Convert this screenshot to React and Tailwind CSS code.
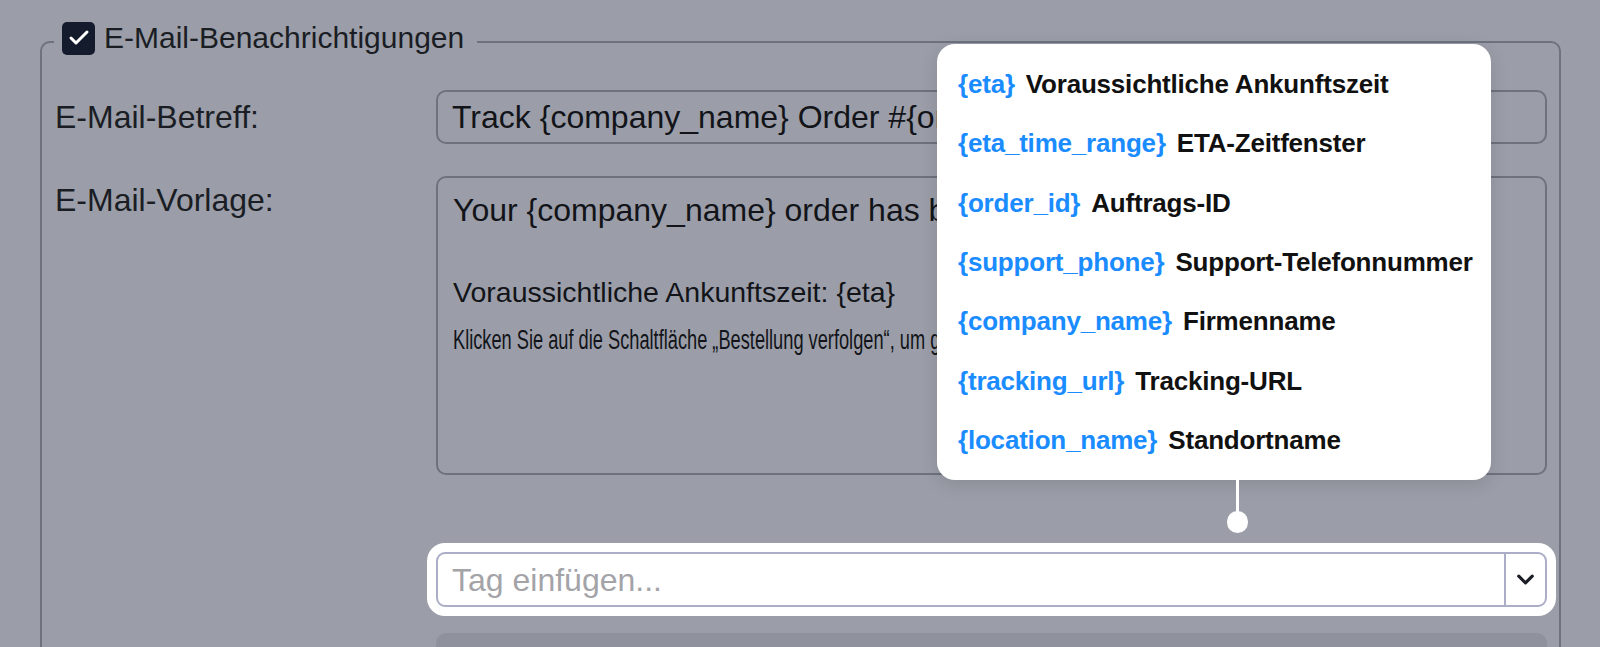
import { Check, ChevronDown } from 'lucide-react'

const tags = [
  ['{eta}', 'Voraussichtliche Ankunftszeit'],
  ['{eta_time_range}', 'ETA-Zeitfenster'],
  ['{order_id}', 'Auftrags-ID'],
  ['{support_phone}', 'Support-Telefonnummer'],
  ['{company_name}', 'Firmenname'],
  ['{tracking_url}', 'Tracking-URL'],
  ['{location_name}', 'Standortname'],
]

function TagPopup() {
  return (
    <>
      {/* Tag list popover */}
      <div className="absolute left-[937px] top-[44px] z-10 flex h-[436px] w-[554px] flex-col justify-center rounded-[18px] bg-white pl-[21px] shadow-[0_4px_18px_rgba(0,0,0,0.12)]">
        {tags.map(([tag, label]) => (
          <div key={tag} className="flex h-[59.3px] items-center gap-[11px] whitespace-nowrap text-[26px] font-bold leading-none tracking-[-0.2px]">
            <span className="text-[#1a8cff]">{tag}</span>
            <span className="text-[#111111]">{label}</span>
          </div>
        ))}
      </div>
      {/* connector */}
      <div className="absolute left-[1236px] top-[478px] z-10 h-[36px] w-[3px] bg-white" />
      <div className="absolute left-[1227px] top-[511px] z-10 h-[22px] w-[21px] rounded-full bg-white" />
    </>
  )
}

export default function App() {
  return (
    <div className="relative h-[647px] w-[1600px] overflow-hidden bg-[#9b9ea8] pt-[21px] font-['Liberation_Sans',Arial,sans-serif] text-[#1a1d24]">
      <fieldset className="ml-[40px] mr-[39px] h-[700px] rounded-[10px] border-2 border-[#6e727e] pl-[12px] pr-[12px]">
        <legend className="flex h-[42px] items-start pl-[8px] pr-[13px]">
          <div className="flex h-[34px] items-center gap-[9px]">
            <span className="flex h-[33px] w-[33px] items-center justify-center rounded-[5px] bg-[#141b2d]">
              <Check size={24} strokeWidth={3} color="white" />
            </span>
            <span className="text-[30px] leading-none">E-Mail-Benachrichtigungen</span>
          </div>
        </legend>

        {/* Subject */}
        <div className="mt-[27px] flex items-center">
          <label className="w-[382px] pl-px text-[32px] leading-none">E-Mail-Betreff:</label>
          <div className="flex h-[54px] flex-1 items-center overflow-hidden whitespace-nowrap rounded-[10px] border-2 border-[#6e727e] pl-[14px] text-[32px] text-[#121419]">
            Track {'{company_name}'} Order #{'{order_id}'}
          </div>
        </div>

        {/* Template */}
        <div className="mt-[32px] flex items-start">
          <label className="w-[382px] pl-px pt-[6px] text-[32px] leading-[36px]">E-Mail-Vorlage:</label>
          <div className="h-[299px] flex-1 overflow-hidden whitespace-nowrap rounded-[10px] border-2 border-[#6e727e] pl-[15px] pt-[14px] text-[#121419]">
            <div className="text-[32px] leading-[36px]">Your {'{company_name}'} order has been shipped!</div>
            <div className="mt-[47px] text-[28.5px] leading-[34px]">Voraussichtliche Ankunftszeit: {'{eta}'}</div>
            <div className="mt-[16px] text-[27px] leading-[30px]">
              <span className="inline-block origin-left scale-x-[0.675]">
                Klicken Sie auf die Schaltfläche „Bestellung verfolgen“, um gelieferte
              </span>
            </div>
          </div>
        </div>

        {/* Tag select */}
        <div className="mt-[77px] flex">
          <div className="w-[382px]" />
          <div className="flex h-[55px] flex-1 items-stretch rounded-[9px] border-2 border-[#abaec6] bg-white ring-[9px] ring-white">
            <div className="flex flex-1 items-center pl-[14px] text-[32px] text-[#a3a3a8]">Tag einfügen...</div>
            <div className="flex w-[41px] items-center justify-center border-l-2 border-[#abaec6]">
              <ChevronDown size={27} strokeWidth={2.8} color="#1b1e26" />
            </div>
          </div>
        </div>

        {/* next block */}
        <div className="mt-[26px] flex">
          <div className="w-[382px]" />
          <div className="h-[40px] flex-1 rounded-t-[10px] bg-[#8f929c]" />
        </div>
      </fieldset>

      <TagPopup />
    </div>
  )
}
